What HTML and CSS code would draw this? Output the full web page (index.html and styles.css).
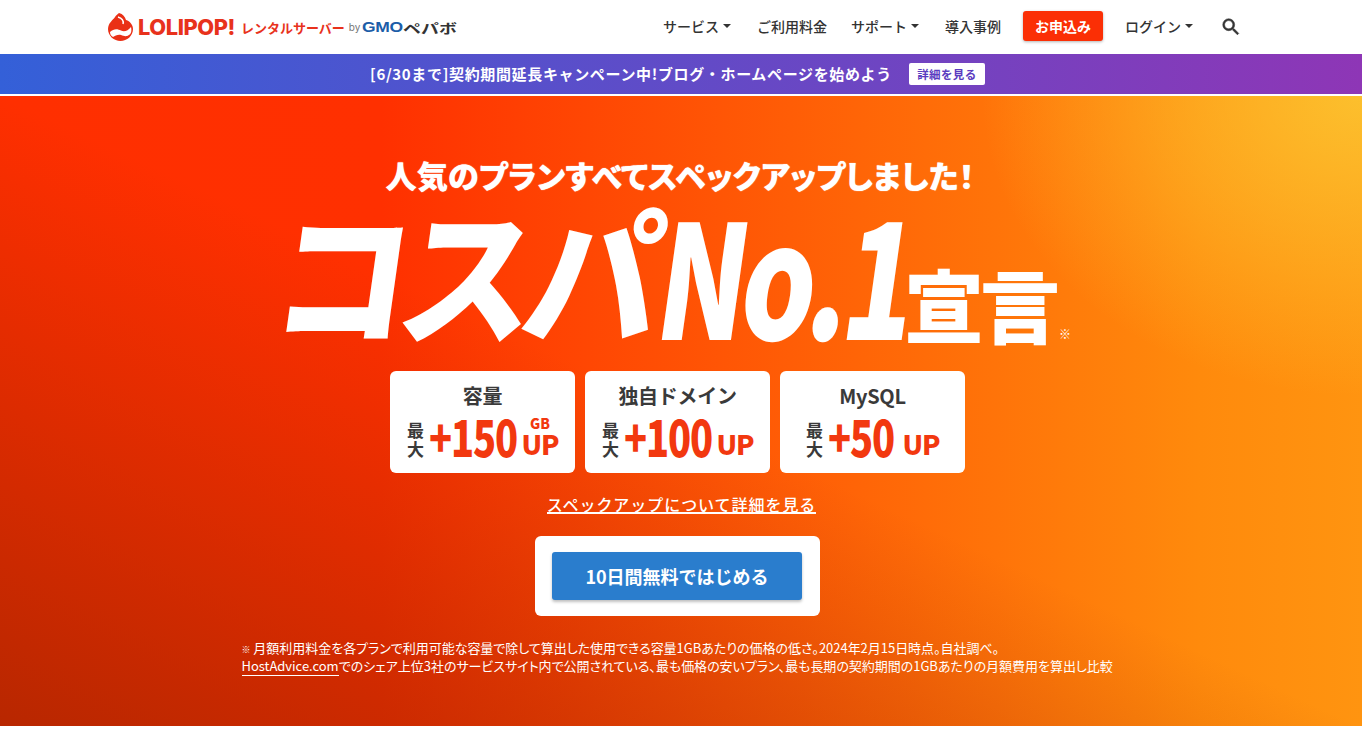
FILE: index.html
```html
<!DOCTYPE html>
<html lang="ja">
<head>
    <meta charset="UTF-8">
    <meta name="viewport" content="width=device-width, initial-scale=1.0">
    <title>ロリポップ!レンタルサーバー</title>
    <link rel="stylesheet" href="styles.css">
</head>
<body>
    <header class="site-header">
        <a href="#" class="logo">
            <svg class="logo-mark" width="26" height="29" viewBox="0 0 26 29">
                <path fill="#ea3016" d="M11 0c4 1 6 4 7 7 4 1 7 5 7 9 0 7-6 12-12.500 12S0 23 0 16c0-6 5-9 7-12 1-2 3-3 4-4z"/>
                <path fill="#fff" d="M2 19c4-4 8-3 11-1.500 3 1.500 7 .5 10-3.500 1 4 0 7-2 8-3 2-5 1-8 0-3-1-6 1-8 2-2-1-3-3-3-5z"/>
                <path fill="none" stroke="#fff" stroke-width="1.500" d="M10 4c4 1 6 4 5 7"/>
            </svg>
            <span class="logo-name">LOLIPOP!</span>
            <span class="logo-sub">レンタルサーバー</span>
            <span class="logo-by">by</span>
            <span class="logo-gmo">GMO</span>
            <span class="logo-pepabo">ペパボ</span>
        </a>
        <nav class="main-nav">
            <a href="#" class="nav-item has-caret">サービス</a>
            <a href="#" class="nav-item">ご利用料金</a>
            <a href="#" class="nav-item has-caret">サポート</a>
            <a href="#" class="nav-item">導入事例</a>
            <a href="#" class="nav-apply">お申込み</a>
            <a href="#" class="nav-item has-caret">ログイン</a>
            <a href="#" class="nav-search" aria-label="検索">
                <svg width="22" height="22" viewBox="0 0 24 24"><path fill="#333" stroke="#333" stroke-width="0.6" d="M15.500 14h-.79l-.28-.27A6.470 6.470 0 0 0 16 9.500 6.500 6.500 0 1 0 9.500 16c1.610 0 3.090-.59 4.230-1.570l.27.28v.79l5 4.990L20.490 19l-4.990-5zm-6 0C7.010 14 5 11.990 5 9.500S7.010 5 9.500 5 14 7.010 14 9.500 11.990 14 9.500 14z"/></svg>
            </a>
        </nav>
    </header>

    <div class="campaign-bar">
        <span class="campaign-text">[6/30まで]契約期間延長キャンペーン中!ブログ・ホームページを始めよう</span>
        <a href="#" class="campaign-btn">詳細を見る</a>
    </div>

    <section class="hero">
        <h2 class="hero-lead">人気のプランすべてスペックアップしました！</h2>
        <h1 class="hero-title">
            <span class="title-kana">コスパ</span><span class="title-no">No.1</span><span class="title-sengen">宣言</span><span class="title-mark">※</span>
        </h1>

        <div class="spec-cards">
            <div class="spec-card">
                <p class="spec-name">容量</p>
                <div class="spec-value">
                    <span class="spec-max">最<br>大</span>
                    <span class="spec-num">+150</span>
                    <span class="spec-up"><small>GB</small>UP</span>
                </div>
            </div>
            <div class="spec-card">
                <p class="spec-name">独自ドメイン</p>
                <div class="spec-value">
                    <span class="spec-max">最<br>大</span>
                    <span class="spec-num">+100</span>
                    <span class="spec-up">UP</span>
                </div>
            </div>
            <div class="spec-card">
                <p class="spec-name">MySQL</p>
                <div class="spec-value">
                    <span class="spec-max">最<br>大</span>
                    <span class="spec-num spec-num-short">+50</span>
                    <span class="spec-up">UP</span>
                </div>
            </div>
        </div>

        <a href="#" class="spec-link">スペックアップについて詳細を見る</a>

        <div class="cta-box">
            <a href="#" class="cta-btn">10日間無料ではじめる</a>
        </div>

        <p class="hero-note">
            <span><small>※</small> 月額利用料金を各プランで利用可能な容量で除して算出した使用できる容量1GBあたりの価格の低さ。2024年2月15日時点。自社調べ。</span>
            <span><a href="#">HostAdvice.com</a>でのシェア上位3社のサービスサイト内で公開されている、最も価格の安いプラン、最も長期の契約期間の1GBあたりの月額費用を算出し比較</span>
        </p>
    </section>
</body>
</html>
```

FILE: styles.css
```css
* {
    margin: 0;
    padding: 0;
    box-sizing: border-box;
}
body {
    font-family: "Noto Sans CJK JP", "Noto Sans", sans-serif;
    background-color: #fff;
    color: #333;
}
a {
    text-decoration: none;
    color: inherit;
}
.site-header {
    height: 54px;
    padding: 0 120px 0 108px;
    display: flex;
    justify-content: space-between;
    align-items: center;
}
.logo {
    display: flex;
    align-items: center;
    white-space: nowrap;
}
.logo-mark {
    margin-right: 4px;
}
.logo-name {
    font-family: Inter, sans-serif;
    font-size: 21.8px;
    font-weight: 800;
    color: #e8321c;
    letter-spacing: -0.4px;
}
.logo-sub {
    font-size: 13px;
    font-weight: 700;
    color: #e8321c;
    margin-left: 6px;
}
.logo-by {
    font-family: Inter, sans-serif;
    font-size: 10px;
    color: #777;
    margin-left: 4px;
}
.logo-gmo {
    font-family: "Liberation Sans", sans-serif;
    font-size: 14px;
    font-weight: 700;
    color: #1c5da8;
    margin-left: 2px;
    letter-spacing: -0.3px;
    transform: scaleX(1.25);
    transform-origin: left center;
    width: 40px;
}
.logo-pepabo {
    width: 54px;
    font-size: 13px;
    font-weight: 700;
    color: #333;
    margin-left: 1px;
    transform: scaleX(1.38);
    transform-origin: left center;
}
.main-nav {
    display: flex;
    align-items: center;
    gap: 24px;
    margin-top: -3px;
    font-size: 14px;
    font-weight: 500;
}
.nav-item {
    display: flex;
    align-items: center;
    white-space: nowrap;
}
.has-caret::after {
    content: "";
    width: 0;
    height: 0;
    margin: 0 2px 0 4px;
    border-left: 4px solid transparent;
    border-right: 4px solid transparent;
    border-top: 4px solid #333;
}
.nav-apply {
    width: 80px;
    height: 30px;
    margin: 0 -2px;
    background-color: #fb2f05;
    color: #fff;
    font-size: 14px;
    font-weight: 700;
    border-radius: 3px;
    box-shadow: 0 1px 3px rgba(0, 0, 0, 0.3);
    display: flex;
    justify-content: center;
    align-items: center;
}
.nav-search {
    display: flex;
    margin: 3px 0 0 1px;
}
.campaign-bar {
    height: 40px;
    padding: 0 7px 2px 0;
    background: linear-gradient(90deg, #3460d8, #8e36b6);
    color: #fff;
    display: flex;
    justify-content: center;
    align-items: center;
    gap: 17px;
    font-size: 15px;
    font-weight: 700;
    letter-spacing: 0.65px;
    margin-bottom: 2px;
}
.campaign-btn {
    width: 76px;
    height: 22px;
    margin-top: 2px;
    background-color: #fff;
    color: #5a3bc0;
    font-size: 11.5px;
    border-radius: 2px;
    display: flex;
    justify-content: center;
    align-items: center;
    letter-spacing: 0.4px;
}
.hero {
    height: 630px;
    padding: 56px 7px 0 0;
    color: #fff;
    display: flex;
    flex-direction: column;
    align-items: center;
    background:
        radial-gradient(ellipse 380px 300px at 100% 0, rgba(252, 196, 48, 0.9), rgba(252, 196, 48, 0)),
        linear-gradient(to top right, rgba(150, 35, 0, 0.68) 0, rgba(150, 35, 0, 0) 50%),
        linear-gradient(90deg, #ff2f00 0, #ff3000 28%, #ff8a0c 88%, #ff9410 100%);
}
.hero-lead {
    margin-left: 5px;
    font-size: 31px;
    font-weight: 900;
    line-height: 46px;
    letter-spacing: 0.3px;
    font-feature-settings: "palt";
    text-shadow: 0 0 1px #fff;
}
.hero-title {
    height: 148px;
    margin-top: 4px;
    display: flex;
    align-items: flex-end;
    font-weight: 900;
    white-space: nowrap;
}
.title-kana {
    width: 375px;
    margin-bottom: 6px;
    font-size: 148px;
    line-height: 148px;
    letter-spacing: -12px;
    transform: translateX(-18px) skewX(-8deg) scaleX(0.92);
    transform-origin: left bottom;
}
.title-no {
    width: 248px;
    margin-bottom: 4px;
    font-size: 158px;
    line-height: 148px;
    letter-spacing: -8px;
    transform: translateX(-8px) skewX(-8deg) scaleX(0.74);
    transform-origin: left bottom;
}
.title-sengen {
    width: 152px;
    margin-bottom: 7px;
    font-size: 80px;
    line-height: 82px;
    letter-spacing: -4px;
    transform: translateX(-3px);
}
.title-mark {
    width: 12px;
    margin-bottom: 5px;
    font-size: 12px;
    font-weight: 400;
    line-height: 22px;
}
.spec-cards {
    margin-top: 21px;
    display: flex;
    gap: 10px;
}
.spec-card {
    width: 185px;
    height: 102px;
    background-color: #fff;
    border-radius: 6px;
    color: #3a3a3a;
    text-align: center;
    padding-top: 11px;
}
.spec-name {
    font-size: 20px;
    font-weight: 700;
    line-height: 28px;
    letter-spacing: -0.3px;
}
.spec-value {
    display: flex;
    justify-content: center;
    align-items: flex-end;
    gap: 5px;
    margin-top: 2px;
}
.spec-max {
    font-size: 17px;
    font-weight: 700;
    line-height: 19px;
}
.spec-num {
    width: 88px;
    font-size: 50px;
    font-weight: 900;
    line-height: 46px;
    letter-spacing: -1.5px;
    color: #f2380f;
    transform: scaleX(0.76);
    transform-origin: left center;
    text-align: left;
}
.spec-num-short {
    width: 70px;
}
.spec-up {
    width: 36px;
    font-size: 27px;
    font-weight: 900;
    line-height: 28px;
    color: #f2380f;
    display: flex;
    flex-direction: column;
    align-items: center;
    letter-spacing: -1px;
}
.spec-up small {
    font-size: 14px;
    line-height: 13px;
    letter-spacing: 0;
}
.spec-link {
    margin: 23px 0 0 8px;
    font-size: 16px;
    font-weight: 500;
    line-height: 16px;
    letter-spacing: 0.95px;
    border-bottom: 2px solid #fff;
}
.cta-box {
    margin-top: 22px;
    width: 285px;
    height: 80px;
    background-color: #fff;
    border-radius: 6px;
    display: flex;
    justify-content: center;
    align-items: center;
}
.cta-btn {
    width: 250px;
    height: 48px;
    margin-left: -1px;
    background-color: #2a7dcd;
    color: #fff;
    font-size: 18px;
    font-weight: 700;
    border-radius: 3px;
    box-shadow: 0 2px 3px rgba(0, 0, 0, 0.25);
    display: flex;
    justify-content: center;
    align-items: center;
}
.hero-note {
    width: 872px;
    margin-top: 24px;
    font-size: 13px;
    line-height: 16px;
    letter-spacing: -0.03px;
    font-feature-settings: "palt";
    white-space: nowrap;
}
.hero-note span {
    display: block;
}
.hero-note small {
    font-size: 9px;
    font-weight: 700;
}
.hero-note a {
    border-bottom: 1px solid #fff;
}
```
